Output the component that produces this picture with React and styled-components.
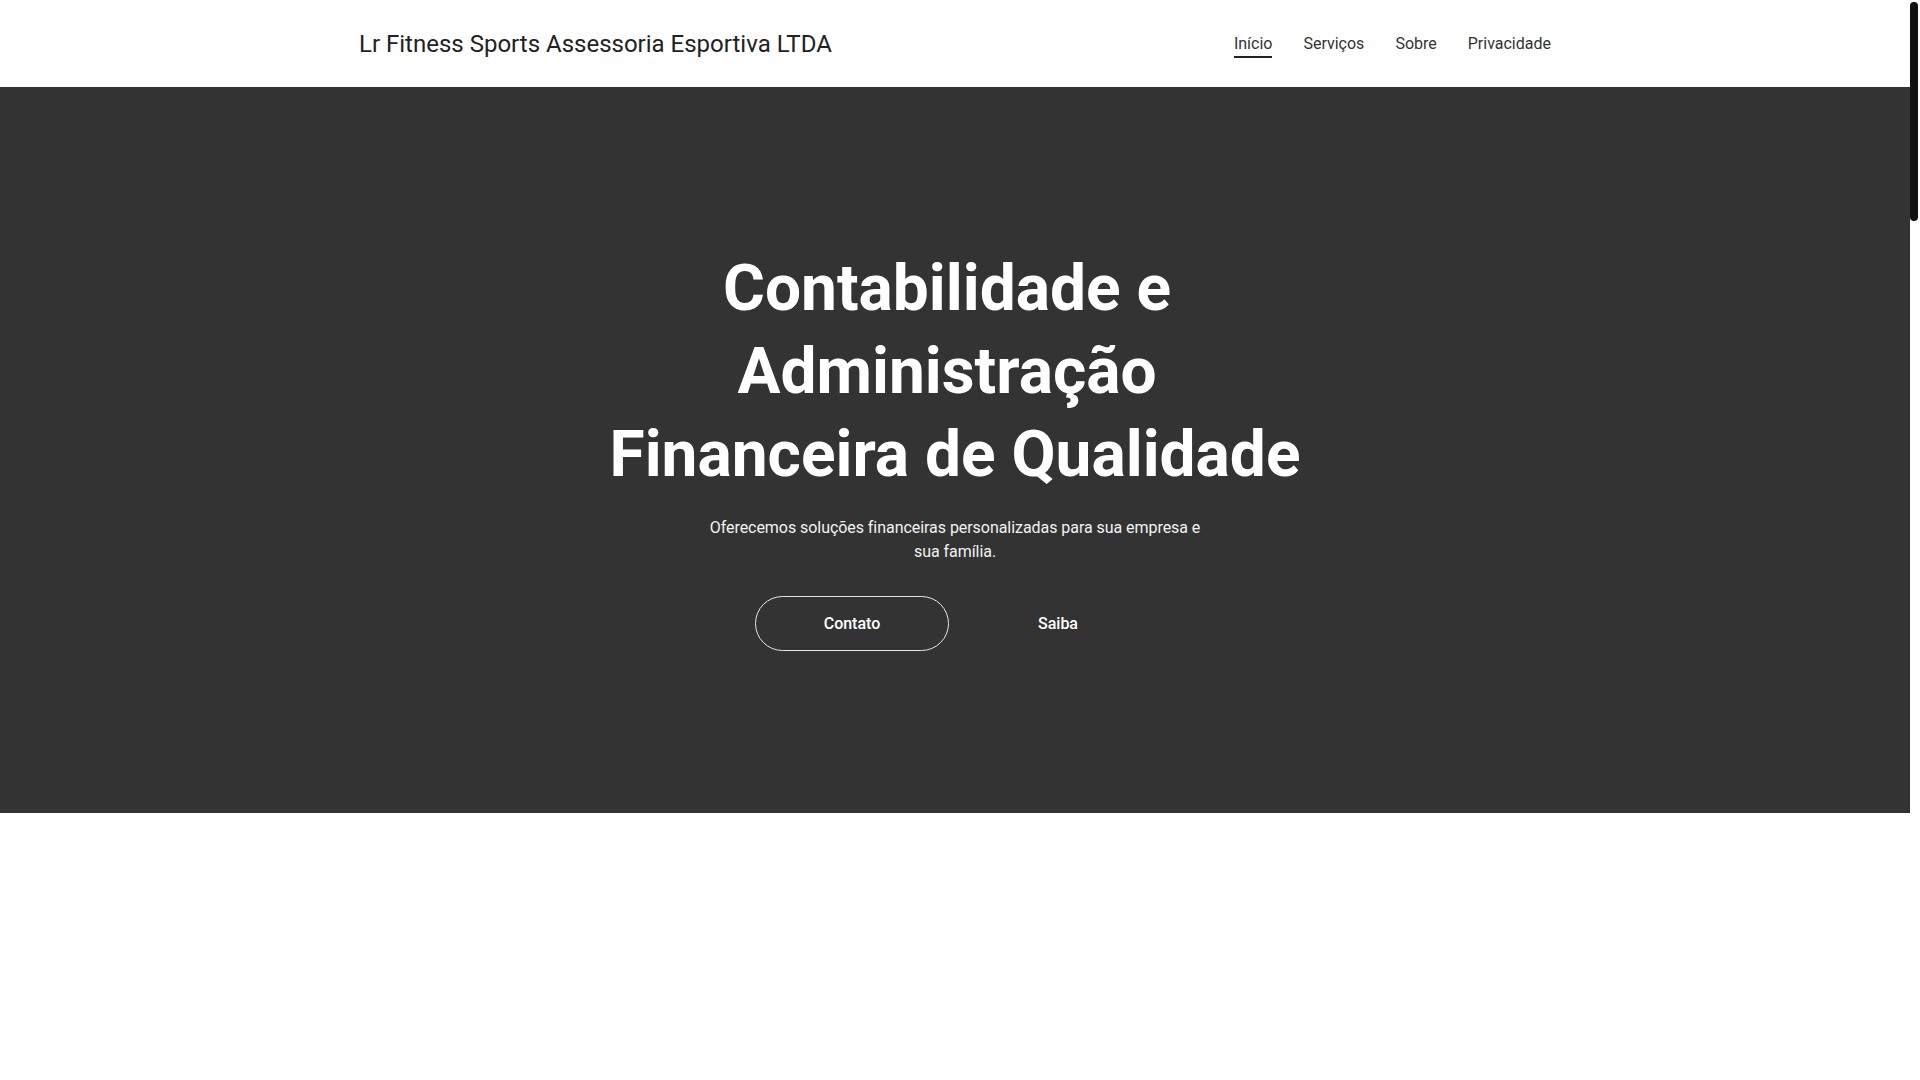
import React from 'react';
import styled, { createGlobalStyle } from 'styled-components';

const GlobalStyle = createGlobalStyle`
  html, body {
    margin: 0;
    padding: 0;
    background: #ffffff;
    font-family: Roboto, "Liberation Sans", Arial, sans-serif;
  }
`;

// leaves room on the right for the thin scrollbar seen in the screenshot
const Page = styled.div`
  margin-right: 10px;
  background: #ffffff;
`;

const ScrollThumb = styled.div`
  position: fixed;
  top: 2px;
  right: 2px;
  width: 8px;
  height: 219px;
  border-radius: 4px;
  background: #111111;
`;

const Header = styled.header`
  height: 87px;
  background: #ffffff;
`;

const Container = styled.div`
  max-width: 1192px;
  height: 100%;
  margin: 0 auto;
  display: flex;
  align-items: center;
  justify-content: space-between;
`;

const Logo = styled.a`
  font-size: 24px;
  color: #222222;
  text-decoration: none;
`;

const Nav = styled.nav`
  display: flex;
  gap: 31px;
`;

const NavLink = styled.a`
  position: relative;
  font-size: 16px;
  color: #333333;
  text-decoration: none;
  padding: 4px 0;

  &::after {
    content: '';
    position: absolute;
    left: 0;
    right: 0;
    bottom: -1px;
    height: 2px;
    background: #222222;
    display: ${({ $active }) => ($active ? 'block' : 'none')};
  }
`;

const Hero = styled.section`
  background: #333333;
  padding: 160px 0 162px;
  display: flex;
  flex-direction: column;
  align-items: center;
  text-align: center;
  color: #ffffff;
`;

const Title = styled.h1`
  margin: 0;
  max-width: 720px;
  font-size: 64px;
  line-height: 83px;
  font-weight: 700;
  white-space: break-spaces;
`;

const Lead = styled.p`
  margin: 20px 0 0;
  max-width: 500px;
  font-size: 16px;
  line-height: 24px;
  letter-spacing: -0.05px;
  color: #f2f2f2;
`;

const Actions = styled.div`
  display: flex;
  gap: 12px;
  margin-top: 32px;
`;

const Button = styled.a`
  display: inline-flex;
  align-items: center;
  justify-content: center;
  width: 194px;
  height: 55px;
  box-sizing: border-box;
  border-radius: 28px;
  border: 1px solid ${({ $outline }) => ($outline ? '#e6e6e6' : 'transparent')};
  color: #ffffff;
  font-size: 16px;
  font-weight: 500;
  text-decoration: none;
`;

const Rest = styled.main`
  height: 4487px;
  background: #ffffff;
`;

export default function App() {
  return (
    <Page>
      <GlobalStyle />
      <Header>
        <Container>
          <Logo href="#">Lr Fitness Sports Assessoria Esportiva LTDA</Logo>
          <Nav>
            <NavLink href="#" $active>Início</NavLink>
            <NavLink href="#">Serviços</NavLink>
            <NavLink href="#">Sobre</NavLink>
            <NavLink href="#">Privacidade</NavLink>
          </Nav>
        </Container>
      </Header>
      <Hero>
        <Title>Contabilidade e Administração Financeira de Qualidade</Title>
        <Lead>Oferecemos soluções financeiras personalizadas para sua empresa e sua família.</Lead>
        <Actions>
          <Button href="#" $outline>Contato</Button>
          <Button href="#">Saiba</Button>
        </Actions>
      </Hero>
      <Rest />
      <ScrollThumb />
    </Page>
  );
}
